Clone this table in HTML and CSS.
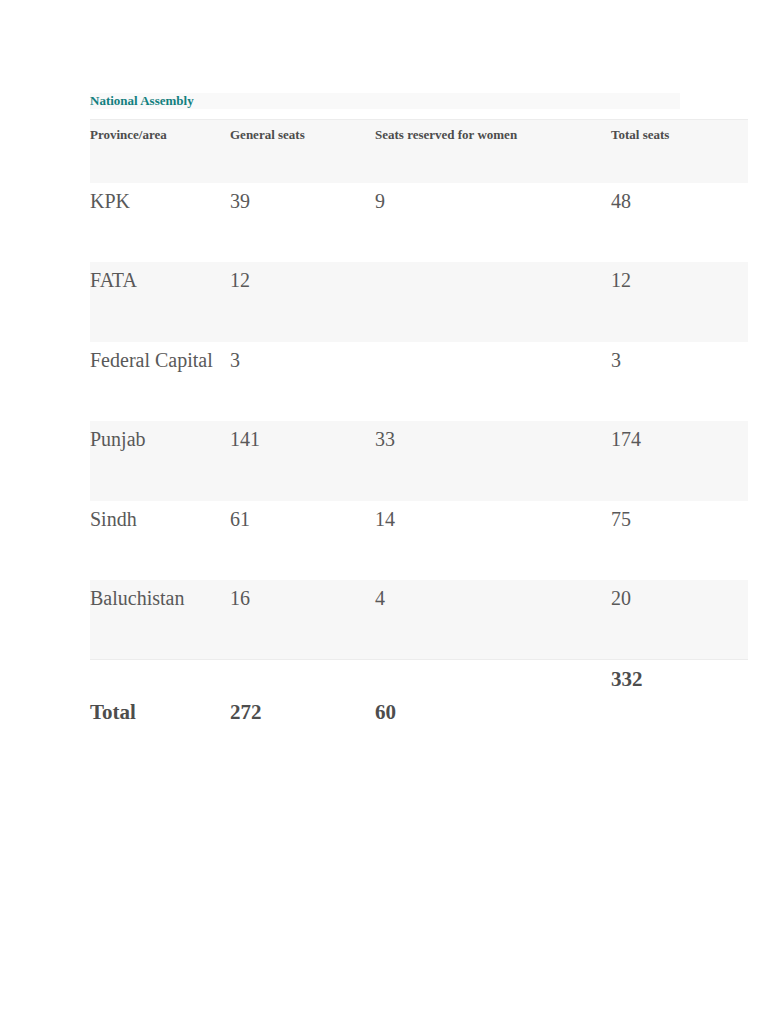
FILE: index.html
```html
<!DOCTYPE html>
<html>
<head>
<meta charset="utf-8">
<link rel="stylesheet" href="styles.css">
</head>
<body>
<div class="page">
  <div class="caption">National Assembly</div>
  <table class="seats">
    <colgroup>
      <col class="c1"><col class="c2"><col class="c3"><col class="c4">
    </colgroup>
    <thead>
      <tr class="head">
        <th>Province/area</th><th>General seats</th><th>Seats reserved for women</th><th>Total seats</th>
      </tr>
    </thead>
    <tbody>
      <tr><td>KPK</td><td>39</td><td>9</td><td>48</td></tr>
      <tr class="alt"><td>FATA</td><td>12</td><td></td><td>12</td></tr>
      <tr><td>Federal Capital</td><td>3</td><td></td><td>3</td></tr>
      <tr class="alt"><td>Punjab</td><td>141</td><td>33</td><td>174</td></tr>
      <tr><td>Sindh</td><td>61</td><td>14</td><td>75</td></tr>
      <tr class="alt last"><td>Baluchistan</td><td>16</td><td>4</td><td>20</td></tr>
      <tr class="total"><td class="low">Total</td><td class="low">272</td><td class="low">60</td><td class="high">332</td></tr>
    </tbody>
  </table>
</div>
</body>
</html>
```
FILE: styles.css
```css
html, body {
  margin: 0;
  padding: 0;
  background: #ffffff;
}
.page {
  padding: 93px 20px 0 90px;
  font-family: "Liberation Serif", "Times New Roman", serif;
  color: #555555;
}
.caption {
  width: 590px;
  height: 16px;
  background: #f9f9f9;
  color: #13807f;
  font-weight: bold;
  font-size: 13px;
  line-height: 16px;
  margin-bottom: 10px;
}
.seats {
  width: 658px;
  border-collapse: collapse;
  table-layout: fixed;
}
.c1 { width: 140px; }
.c2 { width: 145px; }
.c3 { width: 236px; }
.c4 { width: 137px; }
.head th {
  background: #f7f7f7;
  border-top: 1px solid #ececec;
  height: 63px;
  padding: 7px 0 0 0;
  text-align: left;
  vertical-align: top;
  font-size: 13px;
  font-weight: bold;
  color: #4d4d4d;
  line-height: 16px;
  box-sizing: border-box;
}
.seats td {
  height: 79.5px;
  padding: 7px 0 0 0;
  vertical-align: top;
  font-size: 20px;
  line-height: 22px;
  color: #595959;
  box-sizing: border-box;
}
.seats tr.alt td {
  background: #f7f7f7;
}
.seats tr.last td {
  border-bottom: 1px solid #ececec;
}
.seats tr.total td {
  font-weight: bold;
  font-size: 21px;
  color: #4d4d4d;
  height: 86px;
}
.seats tr.total td.low {
  padding-top: 41px;
}
.seats tr.total td.high {
  padding-top: 8px;
}
```
